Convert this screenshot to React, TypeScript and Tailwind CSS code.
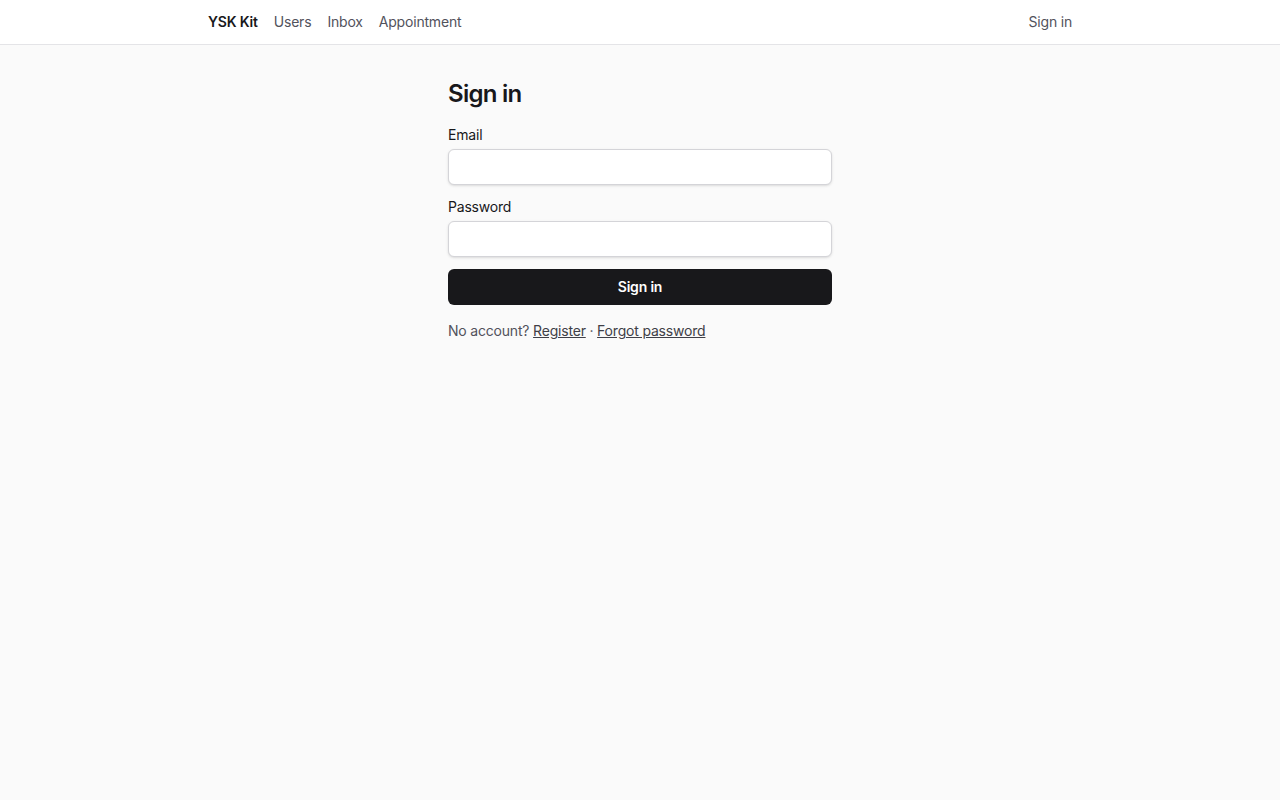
export default function App() {
  return (
    <div className="min-h-screen bg-[#fafafa] text-zinc-900 tracking-[-0.012em]" style={{ fontFamily: "Inter, 'Noto Sans', sans-serif" }}>
      <header className="h-[45px] border-b border-zinc-200 bg-white">
        <nav className="mx-auto flex h-full max-w-4xl items-center justify-between px-4 text-sm">
          <div className="flex items-center gap-4">
            <a className="font-semibold text-zinc-900">YSK Kit</a>
            <a className="text-zinc-600">Users</a>
            <a className="text-zinc-600">Inbox</a>
            <a className="text-zinc-600">Appointment</a>
          </div>
          <a className="text-zinc-600">Sign in</a>
        </nav>
      </header>

      <main className="mx-auto max-w-sm pt-[33px]">
        <h1 className="mb-[15px] text-2xl font-semibold tracking-[-0.03em]">Sign in</h1>
        <form className="space-y-3" onSubmit={(e) => e.preventDefault()}>
          <div className="flex flex-col gap-1">
            <label className="text-sm text-zinc-900">Email</label>
            <input type="email" className="h-9 w-full rounded-md border border-zinc-300 bg-white px-3 text-sm shadow-sm outline-none" />
          </div>
          <div className="flex flex-col gap-1">
            <label className="text-sm text-zinc-900">Password</label>
            <input type="password" className="h-9 w-full rounded-md border border-zinc-300 bg-white px-3 text-sm shadow-sm outline-none" />
          </div>
          <button type="submit" className="h-9 w-full rounded-md bg-zinc-900 text-sm font-semibold text-white">
            Sign in
          </button>
        </form>
        <p className="mt-4 text-sm text-zinc-600">
          No account? <a className="text-zinc-700 underline">Register</a> · <a className="text-zinc-700 underline">Forgot password</a>
        </p>
      </main>
    </div>
  );
}
